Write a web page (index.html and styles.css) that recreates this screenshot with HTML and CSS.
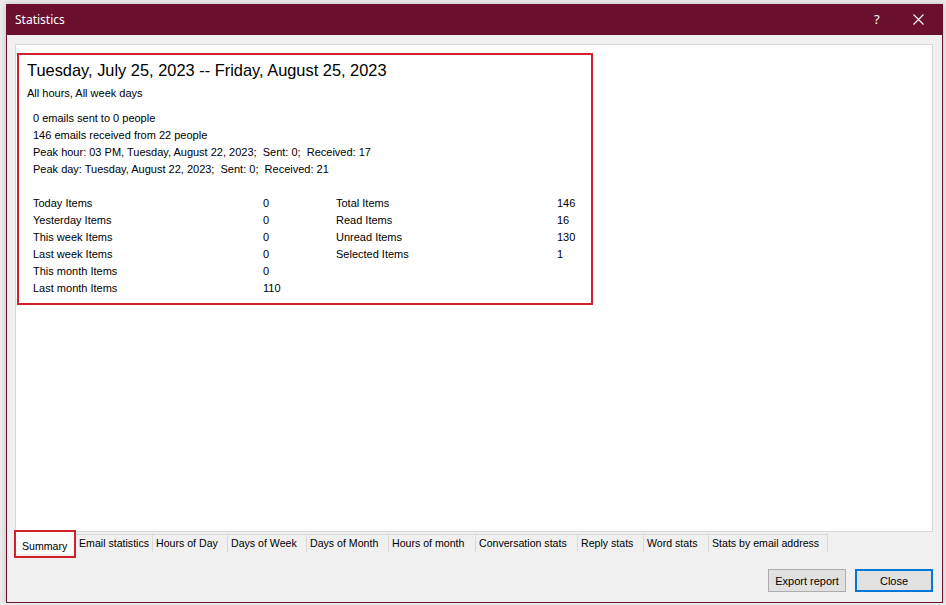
FILE: index.html
```html
<!DOCTYPE html>
<html>
<head>
<meta charset="utf-8">
<title>Statistics</title>
<link rel="stylesheet" href="styles.css">
</head>
<body>
<div class="window">
  <div class="titlebar">
    <span class="title">Statistics</span>
    <span class="help">?</span>
    <span class="close-x">
      <svg width="11" height="11" viewBox="0 0 11 11"><path d="M0.5 0.5 L10.5 10.5 M10.5 0.5 L0.5 10.5" stroke="#fff" stroke-width="1.1" fill="none"/></svg>
    </span>
  </div>
  <div class="wbody">
    <div class="panel">
      <div class="summary">
        <div class="range">Tuesday, July 25, 2023 -- Friday, August 25, 2023</div>
        <div class="filter">All hours, All week days</div>
        <div class="lines">
          <div>0 emails sent to 0 people</div>
          <div>146 emails received from 22 people</div>
          <div>Peak hour: 03 PM, Tuesday, August 22, 2023;&nbsp; Sent: 0;&nbsp; Received: 17</div>
          <div>Peak day: Tuesday, August 22, 2023;&nbsp; Sent: 0;&nbsp; Received: 21</div>
        </div>
        <div class="table">
          <span>Today Items</span><span>0</span><span>Total Items</span><span>146</span>
          <span>Yesterday Items</span><span>0</span><span>Read Items</span><span>16</span>
          <span>This week Items</span><span>0</span><span>Unread Items</span><span>130</span>
          <span>Last week Items</span><span>0</span><span>Selected Items</span><span>1</span>
          <span>This month Items</span><span>0</span><span></span><span></span>
          <span>Last month Items</span><span>110</span><span></span><span></span>
        </div>
      </div>
    </div>
    <div class="tabs">
      <div class="tab active">Summary</div>
      <div class="tab t2">Email statistics</div>
      <div class="tab t3">Hours of Day</div>
      <div class="tab t4">Days of Week</div>
      <div class="tab t5">Days of Month</div>
      <div class="tab t6">Hours of month</div>
      <div class="tab t7">Conversation stats</div>
      <div class="tab t8">Reply stats</div>
      <div class="tab t9">Word stats</div>
      <div class="tab t10">Stats by email address</div>
    </div>
    <div class="buttons">
      <div class="btn">Export report</div>
      <div class="btn primary">Close</div>
    </div>
  </div>
</div>
</body>
</html>
```
FILE: styles.css
```css
html, body {
  margin: 0;
  padding: 0;
}
body {
  background: #ebebeb;
  padding: 4px 0 0 6px;
  font-family: "Liberation Sans", Arial, sans-serif;
  font-size: 11px;
  color: #000;
}
.window {
  width: 935px;
  height: 597px;
  border: 1px solid #6b1030;
  background: #f0f0f0;
  display: flex;
  flex-direction: column;
  box-shadow: 0 0 6px rgba(0,0,0,0.18);
}
.titlebar {
  height: 30px;
  background: #6a0f2e;
  color: #fff;
  display: flex;
  align-items: center;
  padding-left: 8px;
}
.title {
  font-family: "Noto Sans", "Open Sans", sans-serif;
  font-size: 12px;
  flex: 1;
  margin-top: -1px;
}
.help {
  font-family: "Noto Sans", sans-serif;
  font-size: 13px;
  width: 36px;
  margin-top: -3px;
}
.close-x {
  width: 29px;
  height: 30px;
  display: flex;
  align-items: center;
  margin-top: -2px;
  padding-left: 3px;
}
.wbody {
  flex: 1;
  padding: 9px 9px 0 8px;
  display: flex;
  flex-direction: column;
}
.panel {
  height: 478px;
  border: 1px solid #d9d9d9;
  background: #fff;
  padding: 8px 0 0 1px;
}
.summary {
  height: 248px;
  border: 2px solid #d31f29;
  padding: 0 0 0 8px;
  width: 564px;
}
.range {
  font-size: 16.4px;
  line-height: 22px;
  margin-top: 4px;
}
.filter {
  line-height: 17px;
  margin-top: 4px;
}
.lines {
  margin-top: 8px;
  padding-left: 6px;
  line-height: 17px;
}
.table {
  margin-top: 17px;
  padding-left: 6px;
  display: grid;
  grid-template-columns: 230px 73px 221px 40px;
  line-height: 17px;
}
.tabs {
  display: flex;
  align-items: flex-start;
  margin-top: -2px;
  margin-left: -1px;
  position: relative;
  font-size: 10.6px;
}
.tab {
  height: 17px;
  margin-top: 4px;
  border-top: 1px solid #d9d9d9;
  border-right: 1px solid #d9d9d9;
  line-height: 17px;
  padding-left: 3px;
  white-space: nowrap;
  overflow: hidden;
}
.tab.active {
  margin-top: 0;
  height: 24px;
  width: 52px;
  border: 2px solid #d31f29;
  background: linear-gradient(#fafafa 0, #fafafa 22px, #f0f0f0 22px);
  padding-left: 6px;
  line-height: 28px;
}
.t2 { width: 73px; }
.t3 { width: 71px; }
.t4 { width: 75px; }
.t5 { width: 78px; }
.t6 { width: 83px; }
.t7 { width: 98px; }
.t8 { width: 62px; }
.t9 { width: 61px; }
.t10 { width: 115px; }
.buttons {
  display: flex;
  justify-content: flex-end;
  gap: 9px;
  margin-top: 11px;
}
.btn {
  width: 76px;
  height: 21px;
  border: 1px solid #adadad;
  background: #e1e1e1;
  display: flex;
  align-items: center;
  justify-content: center;
}
.btn.primary {
  width: 74px;
  height: 19px;
  border: 2px solid #0078d7;
}
```
